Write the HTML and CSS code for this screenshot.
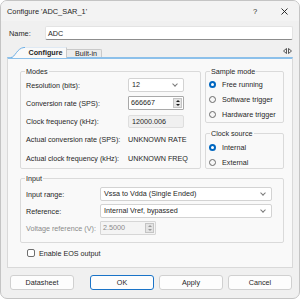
FILE: index.html
```html
<!DOCTYPE html>
<html lang="en">
<head>
    <meta charset="UTF-8">
    <meta name="viewport" content="width=device-width, initial-scale=1.0">
    <title>Configure 'ADC_SAR_1'</title>
    <link rel="stylesheet" href="styles.css">
</head>
<body>
    <div class="dialog">
        <div class="titlebar">
            <span class="title">Configure 'ADC_SAR_1'</span>
            <span class="help">?</span>
            <svg class="close" width="7" height="7" viewBox="0 0 7 7">
                <path d="M0.5 0.5 L6.5 6.5 M6.5 0.5 L0.5 6.5" stroke="#1a1a1a" stroke-width="0.9" fill="none"/>
            </svg>
        </div>

        <div class="name-row">
            <span class="name-label">Name:</span>
            <div class="textbox">ADC</div>
        </div>

        <div class="tabstrip">
            <div class="tab active">
                <svg class="tab-curve" width="14" height="11" viewBox="0 0 14 11">
                    <path d="M0 11 C4 11 6 1 13 0.5 L14 0.5 L14 11 Z" fill="#f9f9f9"/>
                    <path d="M0 10.5 C4 10.5 6 1 13 0.5 L14 0.5" stroke="#6fb0e6" stroke-width="1" fill="none"/>
                </svg>
                <span class="tab-label">Configure</span>
            </div>
            <div class="tab">Built-in</div>
            <svg class="tab-arrows" width="9" height="6" viewBox="0 0 9 6">
                <path d="M3.5 0.5 L0.5 3 L3.5 5.5 Z" fill="none" stroke="#333" stroke-width="0.8"/>
                <path d="M5.5 0.5 L8.5 3 L5.5 5.5 Z" fill="none" stroke="#333" stroke-width="0.8"/>
            </svg>
        </div>

        <div class="panel">
            <div class="top">
                <fieldset class="group modes">
                    <legend>Modes</legend>
                    <div class="row">
                        <span class="label">Resolution (bits):</span>
                        <div class="combo small">12<span class="chev"></span></div>
                    </div>
                    <div class="row">
                        <span class="label">Conversion rate (SPS):</span>
                        <div class="spin">
                            <span class="spin-value">666667</span>
                            <span class="spin-buttons"><i class="up"></i><i class="down"></i></span>
                        </div>
                    </div>
                    <div class="row">
                        <span class="label">Clock frequency (kHz):</span>
                        <div class="readonly">12000.006</div>
                    </div>
                    <div class="row">
                        <span class="label">Actual conversion rate (SPS):</span>
                        <span class="value">UNKNOWN RATE</span>
                    </div>
                    <div class="row">
                        <span class="label">Actual clock frequency (kHz):</span>
                        <span class="value">UNKNOWN FREQ</span>
                    </div>
                </fieldset>

                <div class="side">
                    <fieldset class="group sample">
                        <legend>Sample mode</legend>
                        <div class="radio checked">Free running</div>
                        <div class="radio">Software trigger</div>
                        <div class="radio">Hardware trigger</div>
                    </fieldset>
                    <fieldset class="group clock">
                        <legend>Clock source</legend>
                        <div class="radio checked">Internal</div>
                        <div class="radio">External</div>
                    </fieldset>
                </div>
            </div>

            <fieldset class="group input">
                <legend>Input</legend>
                <div class="row">
                    <span class="label">Input range:</span>
                    <div class="combo wide">Vssa to Vdda (Single Ended)<span class="chev"></span></div>
                </div>
                <div class="row">
                    <span class="label">Reference:</span>
                    <div class="combo wide">Internal Vref, bypassed<span class="chev"></span></div>
                </div>
                <div class="row disabled">
                    <span class="label">Voltage reference (V):</span>
                    <div class="spin">
                        <span class="spin-value">2.5000</span>
                        <span class="spin-buttons"><i class="up"></i><i class="down"></i></span>
                    </div>
                </div>
            </fieldset>

            <div class="check">
                <span class="box"></span>
                <span>Enable EOS output</span>
            </div>
        </div>

        <div class="buttons">
            <button class="btn datasheet">Datasheet</button>
            <button class="btn default">OK</button>
            <button class="btn">Apply</button>
            <button class="btn">Cancel</button>
        </div>
    </div>
</body>
</html>
```

FILE: styles.css
```css
* {
    margin: 0;
    padding: 0;
    box-sizing: border-box;
    font-family: 'Liberation Sans', Arial, sans-serif;
}

body {
    background: #ffffff;
    font-size: 7.2px;
    color: #262626;
}

.dialog {
    width: 300px;
    height: 299px;
    border: 1px solid #c4c4c4;
    border-radius: 7px;
    background: #f0f0f0;
    display: flex;
    flex-direction: column;
    overflow: hidden;
}

/* title bar */
.titlebar {
    height: 20px;
    display: flex;
    align-items: center;
    padding-left: 6px;
    background: #f3f3f3;
}

.title {
    flex: 1;
    font-size: 7.4px;
}

.help {
    width: 8px;
    text-align: center;
    font-size: 7.6px;
    margin-right: 22px;
}

.close {
    margin-right: 11px;
}

/* name */
.name-row {
    display: flex;
    align-items: center;
    padding: 5px 6px 0 8px;
}

.name-label {
    width: 36px;
    font-size: 7.4px;
}

.textbox {
    flex: 1;
    height: 14px;
    line-height: 13px;
    padding-left: 2px;
    background: #ffffff;
    border: 1px solid #e3e3e3;
    border-bottom-color: #8c8c8c;
    border-radius: 2px;
}

/* tabs */
.tabstrip {
    display: flex;
    align-items: flex-end;
    height: 10px;
    margin-top: 7px;
    padding-left: 10px;
    padding-right: 7px;
}

.tab {
    height: 8px;
    line-height: 8px;
    padding: 0 4px 0 8px;
    white-space: nowrap;
    background: #ececec;
    border: 1px solid #c9c9c9;
    border-bottom: none;
    border-left: none;
    border-radius: 0 2px 0 0;
}

.tab.active {
    display: flex;
    align-items: flex-end;
    height: 11px;
    padding: 0;
    margin-bottom: -1px;
    background: none;
    border: none;
    position: relative;
    z-index: 1;
}

.tab-label {
    display: block;
    width: 42px;
    height: 11px;
    line-height: 10px;
    text-align: center;
    font-weight: bold;
    background: #f9f9f9;
    border-top: 1px solid #dfe9f3;
    border-right: 1px solid #c9c9c9;
}

.tab-arrows {
    margin-left: auto;
    margin-bottom: 3px;
}

/* panel */
.panel {
    flex: 1;
    margin: 0 6px;
    padding: 8px 8px 0 12px;
    background: #f9f9f9;
    border: 1px solid #d9d9d9;
    border-top: 2px solid #8cc0ea;
}

.top {
    display: flex;
    gap: 4px;
}

.group {
    border: 1px solid #dadada;
    border-radius: 2px;
}

.group legend {
    line-height: 9px;
    padding: 0 1px;
    margin-left: -1px;
}

.row {
    display: flex;
    align-items: center;
    height: 14px;
}

.modes {
    width: 181px;
    padding: 2px 5px 3px 5px;
}

.modes .row + .row {
    margin-top: 4.3px;
}

.modes .label {
    width: 102px;
}

.combo {
    position: relative;
    height: 14px;
    line-height: 12px;
    padding-left: 3px;
    background: #ffffff;
    border: 1px solid #d3d3d3;
    border-radius: 2px;
}

.combo.small {
    width: 56px;
}

.combo.wide {
    width: 172px;
}

.chev {
    position: absolute;
    right: 6px;
    top: 3px;
    width: 4px;
    height: 4px;
    border-right: 1px solid #7a7a7a;
    border-bottom: 1px solid #7a7a7a;
    transform: rotate(45deg);
}

.spin {
    display: flex;
    width: 56px;
    height: 14px;
    background: #ffffff;
    border: 1px solid #a9a9a9;
    border-radius: 1px;
}

.spin-value {
    flex: 1;
    line-height: 12px;
    padding-left: 2px;
}

.spin-buttons {
    display: flex;
    flex-direction: column;
    justify-content: center;
    gap: 2px;
    width: 9px;
    margin: 1px;
    background: #e4e4e4;
    border: 1px solid #c4c4c4;
    align-items: center;
}

.spin-buttons i {
    display: block;
    width: 0;
    height: 0;
    border-left: 2px solid transparent;
    border-right: 2px solid transparent;
}

.spin-buttons .up {
    border-bottom: 2px solid #1a1a1a;
}

.spin-buttons .down {
    border-top: 2px solid #1a1a1a;
}

.readonly {
    width: 56px;
    height: 13px;
    line-height: 11px;
    padding-left: 3px;
    background: #f0f0f0;
    border: 1px solid #dedede;
    border-radius: 2px;
}

/* right column */
.side {
    width: 79px;
    display: flex;
    flex-direction: column;
}

.sample {
    padding: 3px;
}

.clock {
    margin-top: 6px;
    padding: 4px 3px 1px 3px;
}

.side legend {
    margin-left: 1px;
}

.radio {
    display: flex;
    align-items: center;
    gap: 6px;
    height: 10px;
}

.radio + .radio {
    margin-top: 5px;
}

.radio::before {
    content: "";
    box-sizing: border-box;
    width: 7px;
    height: 7px;
    border-radius: 50%;
    border: 1px solid #6a6a6a;
    background: #f7f7f7;
}

.radio.checked::before {
    border: 2px solid #0067c0;
    background: #ffffff;
}

/* input group */
.input {
    margin-top: 5px;
    padding: 4px 5px 7px 5px;
}

.input .row + .row {
    margin-top: 3px;
}

.input .label {
    width: 74px;
}

.row.disabled .label,
.row.disabled .spin-value {
    color: #8a8a8a;
}

.row.disabled .spin {
    background: #f4f4f4;
    border-color: #d6d6d6;
}

.row.disabled .spin-buttons i {
    border-bottom-color: #9a9a9a;
    border-top-color: #9a9a9a;
}

.check {
    display: flex;
    align-items: center;
    gap: 4px;
    margin: 6px 0 0 7px;
    height: 8px;
}

.check .box {
    width: 8px;
    height: 8px;
    background: #ffffff;
    border: 1px solid #6e6e6e;
    border-radius: 2px;
}

/* buttons */
.buttons {
    display: flex;
    gap: 5px;
    padding: 7px 6px 8px 9px;
}

.btn {
    width: 64px;
    height: 15px;
    font-size: 7.2px;
    color: #262626;
    background: #fdfdfd;
    border: 1px solid #d0d0d0;
    border-radius: 3px;
}

.btn.datasheet {
    margin-right: 11px;
}

.btn.default {
    border-color: #1a73c7;
}
```
